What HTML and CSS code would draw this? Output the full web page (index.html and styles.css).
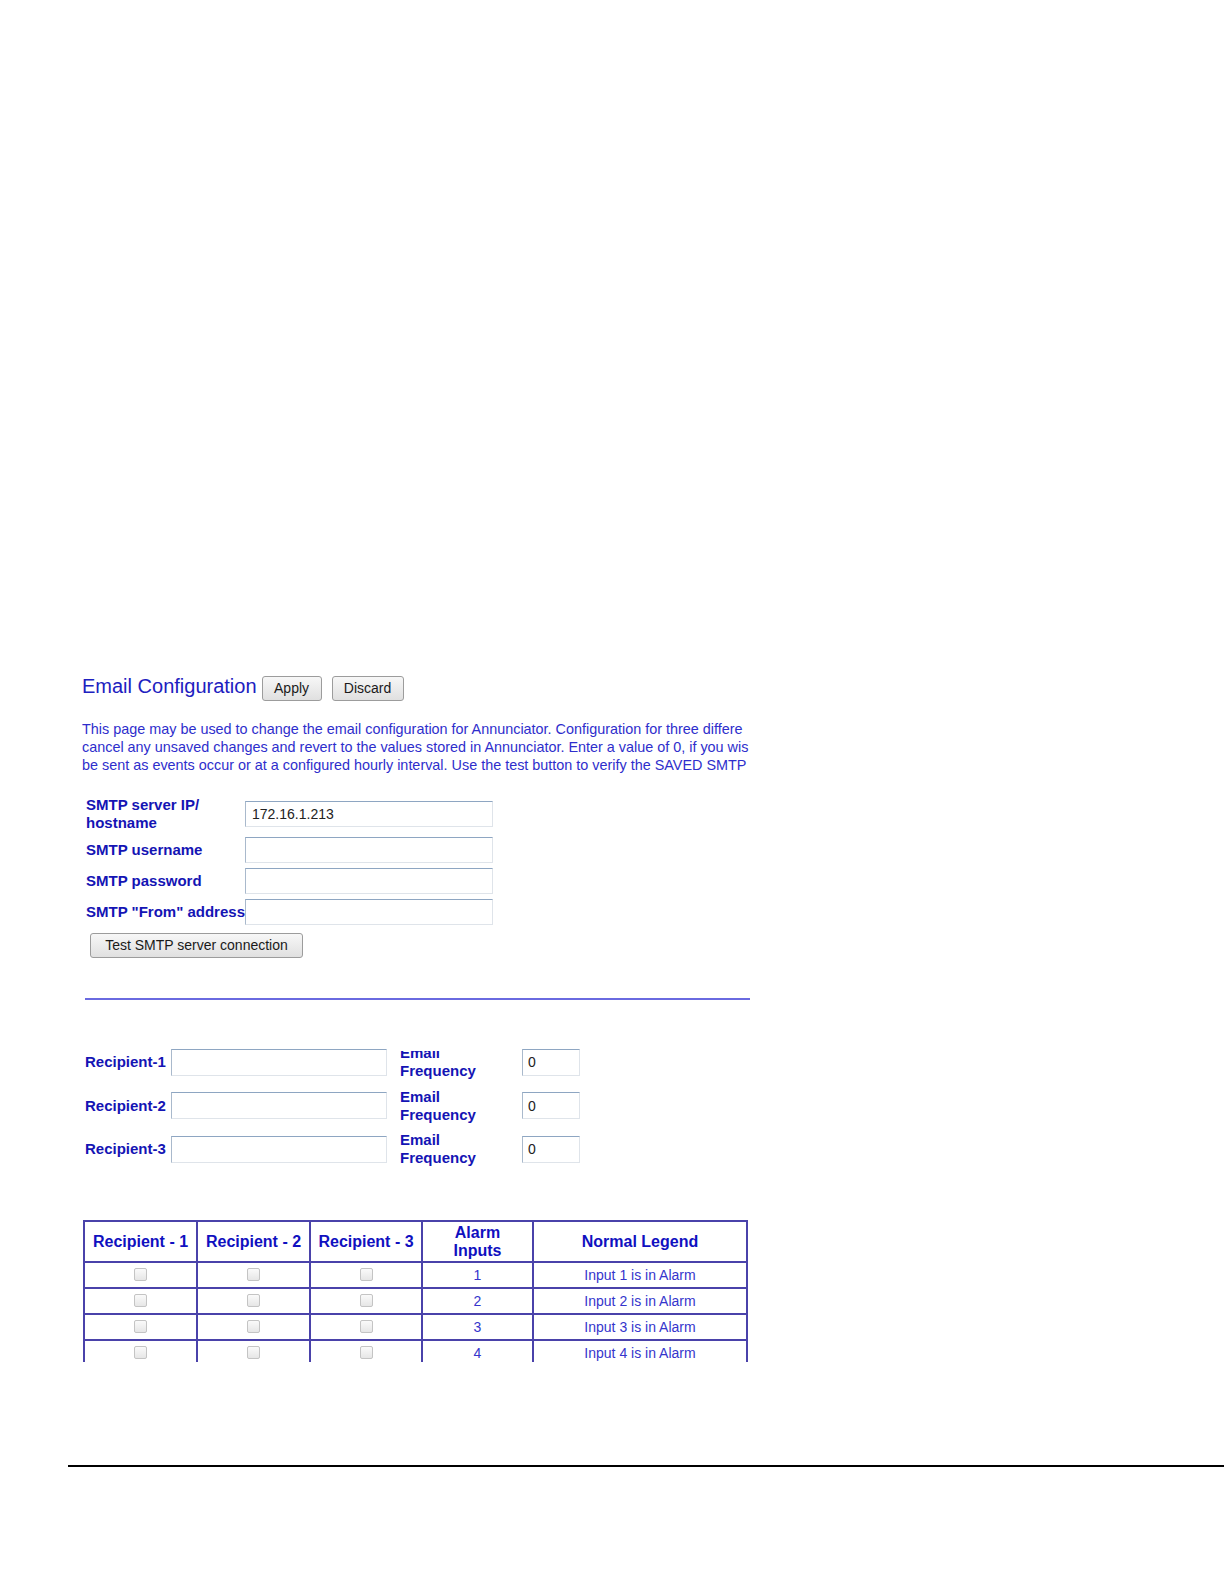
FILE: index.html
```html
<!DOCTYPE html>
<html>
<head>
<meta charset="utf-8">
<title>Email Configuration</title>
<link rel="stylesheet" href="styles.css">
</head>
<body>
<div class="shot">
  <div class="head">
    <h1 class="title">Email Configuration</h1>
    <button class="btn btn-apply">Apply</button>
    <button class="btn btn-discard">Discard</button>
  </div>
  <p class="intro">This page may be used to change the email configuration for Annunciator. Configuration for three differe<br>cancel any unsaved changes and revert to the values stored in Annunciator. Enter a value of 0, if you wis<br>be sent as events occur or at a configured hourly interval. Use the test button to verify the SAVED SMTP</p>

  <div class="smtp">
    <label class="lbl">SMTP server IP/<br>hostname</label>
    <input class="field" type="text" value="172.16.1.213">
    <label class="lbl">SMTP username</label>
    <input class="field" type="text" value="">
    <label class="lbl">SMTP password</label>
    <input class="field" type="text" value="">
    <label class="lbl">SMTP "From" address</label>
    <input class="field" type="text" value="">
  </div>
  <button class="btn btn-test">Test SMTP server connection</button>

  <div class="rule"></div>

  <div class="recips">
    <label class="lbl">Recipient-1</label>
    <input class="field rfield" type="text" value="">
    <label class="lbl freq freq-clip">Email<br>Frequency</label>
    <input class="field ffield" type="text" value="0">

    <label class="lbl">Recipient-2</label>
    <input class="field rfield" type="text" value="">
    <label class="lbl freq">Email<br>Frequency</label>
    <input class="field ffield" type="text" value="0">

    <label class="lbl">Recipient-3</label>
    <input class="field rfield" type="text" value="">
    <label class="lbl freq">Email<br>Frequency</label>
    <input class="field ffield" type="text" value="0">
  </div>

  <table class="grid">
    <colgroup>
      <col class="c1"><col class="c2"><col class="c3"><col class="c4"><col class="c5">
    </colgroup>
    <thead>
      <tr>
        <th>Recipient - 1</th>
        <th>Recipient - 2</th>
        <th>Recipient - 3</th>
        <th>Alarm<br>Inputs</th>
        <th>Normal Legend</th>
      </tr>
    </thead>
    <tbody>
      <tr><td><input class="chk" type="checkbox" disabled></td><td><input class="chk" type="checkbox" disabled></td><td><input class="chk" type="checkbox" disabled></td><td>1</td><td>Input 1 is in Alarm</td></tr>
      <tr><td><input class="chk" type="checkbox" disabled></td><td><input class="chk" type="checkbox" disabled></td><td><input class="chk" type="checkbox" disabled></td><td>2</td><td>Input 2 is in Alarm</td></tr>
      <tr><td><input class="chk" type="checkbox" disabled></td><td><input class="chk" type="checkbox" disabled></td><td><input class="chk" type="checkbox" disabled></td><td>3</td><td>Input 3 is in Alarm</td></tr>
      <tr><td><input class="chk" type="checkbox" disabled></td><td><input class="chk" type="checkbox" disabled></td><td><input class="chk" type="checkbox" disabled></td><td>4</td><td>Input 4 is in Alarm</td></tr>
    </tbody>
  </table>
</div>
<div class="page-rule"></div>
</body>
</html>
```

FILE: styles.css
```css
html, body {
  margin: 0;
  padding: 0;
  background: #ffffff;
}
body {
  font-family: "Liberation Sans", Arial, sans-serif;
  width: 1224px;
  height: 1584px;
  overflow: hidden;
}
.shot {
  margin: 665px 0 0 82px;
  width: 668px;
  height: 697px;
  overflow: hidden;
  color: #2a2ac8;
}
.head {
  display: flex;
  align-items: center;
  padding-top: 11px;
  height: 25px;
}
.title {
  margin: 0;
  font-weight: normal;
  font-size: 20px;
  line-height: 25px;
  color: #2020c0;
  position: relative;
  top: -2px;
}
.btn {
  font-family: "Liberation Sans", Arial, sans-serif;
  font-size: 14px;
  color: #1a1a1a;
  height: 25px;
  padding: 0 12px;
  border: 1px solid #9c9c9c;
  border-radius: 3px;
  background: linear-gradient(#f7f7f7, #e0e0e0);
  line-height: 23px;
}
.btn-apply {
  margin-left: 5px;
  width: 60px;
  padding: 0;
}
.btn-discard {
  margin-left: 10px;
  width: 72px;
  padding: 0;
}
.intro {
  margin: 19px 0 0 0;
  font-size: 14.4px;
  line-height: 18px;
  white-space: nowrap;
  color: #2e2ecc;
}
.lbl {
  font-weight: bold;
  font-size: 15px;
  line-height: 18px;
  color: #1414b4;
}
.smtp {
  margin-top: 22px;
  padding-left: 4px;
  display: grid;
  grid-template-columns: 159px 248px;
  row-gap: 5px;
  align-items: center;
}
.field {
  box-sizing: border-box;
  height: 26px;
  width: 248px;
  margin: 0;
  padding: 0 6px;
  font-family: "Liberation Sans", Arial, sans-serif;
  font-size: 14px;
  color: #222;
  background: #fff;
  border: 1px solid #dfe4ea;
  border-top-color: #8ea6c2;
  border-left-color: #a9b9cc;
}
.btn-test {
  display: block;
  margin: 8px 0 0 8px;
  width: 213px;
  padding: 0;
}
.rule {
  margin: 40px 0 0 3px;
  height: 2px;
  background: #6a6ae0;
}
.recips {
  margin-top: 44px;
  padding-left: 3px;
  display: grid;
  grid-template-columns: 86px 229px 122px 58px;
  row-gap: 7.5px;
  align-items: center;
}
.rfield {
  width: 216px;
  height: 27px;
}
.ffield {
  width: 58px;
  height: 27px;
  padding: 0 5px;
}
.freq-clip {
  clip-path: inset(7px 0 0 0);
}
.grid {
  margin: 53px 0 0 1px;
  width: 663px;
  table-layout: fixed;
  border-collapse: collapse;
  border: 2px solid #6a62c4;
}
.c1 { width: 113px; }
.c2 { width: 113px; }
.c3 { width: 112px; }
.c4 { width: 111px; }
.c5 { width: 214px; }
.grid th, .grid td {
  border: 2px solid #4a42aa;
  text-align: center;
  padding: 0;
}
.grid th {
  height: 39px;
  font-size: 16px;
  line-height: 18px;
  font-weight: bold;
  color: #1010c0;
}
.grid td {
  height: 24px;
  font-size: 14px;
  color: #3535cc;
}
.chk {
  appearance: none;
  -webkit-appearance: none;
  box-sizing: border-box;
  width: 13px;
  height: 13px;
  margin: 0;
  vertical-align: middle;
  border: 1px solid #c4c4c4;
  border-radius: 2px;
  background: linear-gradient(#fafafa, #e6e6e6);
  position: relative;
  top: -2px;
}
.page-rule {
  margin: 103px 0 0 68px;
  width: 1156px;
  height: 2px;
  background: #000;
}
```
